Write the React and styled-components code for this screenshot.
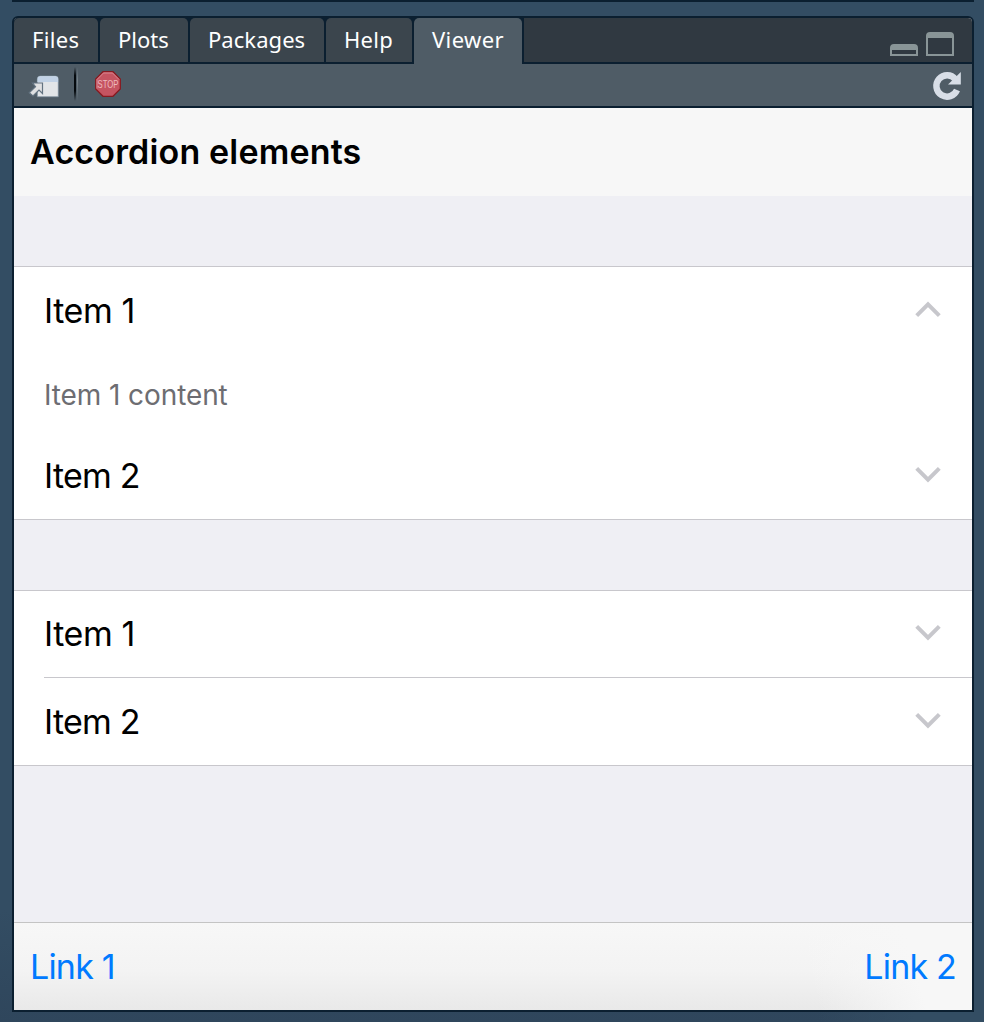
import React from "react";
import styled, { createGlobalStyle, css } from "styled-components";

const edge = "#0b1f30";

const GlobalStyle = createGlobalStyle`
  * { box-sizing: border-box; }
  body { margin: 0; background: #324b61; }
`;

const Desktop = styled.div`
  height: 1022px;
  padding: 0 10px 10px 12px;
  display: flex;
  flex-direction: column;
  overflow: hidden;
  background:
    linear-gradient(90deg, transparent 83%, #334d63 93%),
    linear-gradient(#334d63 0, #334d63 910px, #2f465c 1022px);
`;

const PaneAbove = styled.div`
  height: 2px;
  margin-bottom: 14px;
  background: ${edge};
`;

const Panel = styled.section`
  flex: 1;
  display: flex;
  flex-direction: column;
  border: 2px solid ${edge};
  border-radius: 6px 6px 0 0;
  background: #efeff4;
  overflow: hidden;
`;

const TabStrip = styled.nav`
  height: 46px;
  flex: none;
  display: flex;
  background: linear-gradient(${edge}, ${edge}) bottom / 100% 2px no-repeat #303941;
`;

const TabSlot = styled.div`
  width: ${(p) => p.$width}px;
  height: ${(p) => (p.$active ? 46 : 44)}px;
  padding-right: 2px;
  background: ${edge};
`;

const Tab = styled.div`
  height: 100%;
  padding: 7px 0 0 18px;
  border-radius: 5px 5px 0 0;
  color: #fff;
  background: #3b454d;
  font: 22px/28px "Noto Sans", sans-serif;
  letter-spacing: ${(p) => p.$spacing}px;
  white-space: nowrap;
  ${(p) => p.$active && css`background: #4f5c66;`}
`;

const WindowControls = styled.div`
  display: flex;
  align-items: flex-end;
  gap: 8px;
  height: 38px;
  margin-left: auto;
  margin-right: 18px;
`;

const WindowButton = styled.div`
  width: 28px;
  height: ${(p) => p.$height}px;
  border: 2px solid #899597;
  border-top-width: 6px;
  border-radius: 4px 4px 0 0;
`;

const Toolbar = styled.div`
  height: 44px;
  flex: none;
  display: flex;
  align-items: flex-start;
  padding: 0 8px 0 14px;
  background: #4f5c66;
  border-bottom: 2px solid ${edge};
`;

const ToolIcon = styled.svg`
  display: block;
  flex: none;
  overflow: visible;
  margin: ${(p) => p.$margin};
`;

const Separator = styled.div`
  width: 4px;
  height: 34px;
  margin: 3px 17px 0 14px;
  background:
    linear-gradient(transparent, #050a0e 25%, #050a0e 70%, transparent) left / 2px 100% no-repeat,
    linear-gradient(transparent, #77828a 40%, transparent) right / 1px 100% no-repeat;
`;

const Navbar = styled.header`
  height: 88px;
  flex: none;
  padding: 22px 16px;
  background: #f7f7f7;
  color: #000;
  font: 600 34px/44px Inter, sans-serif;
  letter-spacing: 0.16px;
`;

const List = styled.div`
  flex: none;
  margin-top: 70px;
  border: solid #c8c7cc;
  border-width: 1px 0;
  background: #fff;
`;

const Item = styled.div`
  height: 87px;
  margin-left: 30px;
  padding-right: 30px;
  display: flex;
  align-items: center;
  justify-content: space-between;
  border-bottom: ${(p) => (p.$divided ? "1px solid #c8c7cc" : "none")};
  color: #000;
  font: 34px/44px Inter, sans-serif;
  letter-spacing: ${(p) => p.$spacing ?? -0.75}px;
`;

const ItemContent = styled.div`
  height: 78px;
  padding: 23px 30px 0;
  color: #6d6d72;
  font: 28px/36px Inter, sans-serif;
  letter-spacing: -0.1px;
`;

const Footer = styled.footer`
  height: 88px;
  flex: none;
  margin-top: auto;
  padding: 0 16px;
  display: flex;
  align-items: center;
  justify-content: space-between;
  border-top: 1px solid #c4c4c4;
  background:
    linear-gradient(75deg, transparent 82%, #f7f7f7 93%),
    linear-gradient(#f7f7f7, #f3f3f3 55%, #e9e9e9);
`;

const Link = styled.a`
  color: #007aff;
  font: 34px/44px Inter, sans-serif;
  letter-spacing: -0.8px;
`;

function Chevron({ up }) {
  return (
    <ToolIcon $margin={up ? "-3px 0 0" : "-4px 0 0"} width="28" height="18" viewBox="0 0 28 18" fill="none" stroke="#c7c7cc" strokeWidth="4">
      <path d={up ? "M2.7 15.6 14 4.3 25.3 15.6" : "M2.7 3.4 14 14.7 25.3 3.4"} />
    </ToolIcon>
  );
}

function PopOutIcon() {
  return (
    <ToolIcon $margin="9px 0 0" width="32" height="26" viewBox="0 0 32 26">
      <path d="M9.3 23.8V6a3 3 0 0 1 3-3h15a3 3 0 0 1 3 3v17.8z" fill="#e2e5e8" stroke="#77899a" strokeWidth=".7" />
      <path d="M9.5 9V6a2.8 2.8 0 0 1 2.8-2.8h15A2.8 2.8 0 0 1 30.1 6v3z" fill="#c1d2e6" />
      <path d="M4.5 10h10v10.5L11 17 5 23l-3.8-3.2L7.5 13.7z" fill="#dfe0e2" stroke="#637381" strokeWidth="1.2" />
    </ToolIcon>
  );
}

function StopIcon() {
  return (
    <ToolIcon $margin="7px 0 0" width="26" height="26" viewBox="0 0 26 26">
      <path d="M8 .7h10L25.3 8v10L18 25.3H8L.7 18V8z" fill="#c65461" stroke="#871a20" strokeWidth="1.3" />
      <path d="M2 17.5V8.5L8.5 2h9L24 8.5" fill="none" stroke="#d98891" />
      <text x="13" y="17" textAnchor="middle" textLength="21" lengthAdjust="spacingAndGlyphs" fontFamily="Liberation Sans, sans-serif" fontSize="11" fill="#edb9be">STOP</text>
    </ToolIcon>
  );
}

function RefreshIcon() {
  return (
    <ToolIcon $margin="7px 0 0 auto" width="32" height="30" viewBox="0 0 32 30">
      <path d="M23.4 8.2A10.7 10.7 0 1 0 25 19" fill="none" stroke="#d8dee7" strokeWidth="6.4" />
      <path d="M28.8 1v12.6H16z" fill="#d8dee7" />
    </ToolIcon>
  );
}

const tabs = [
  { name: "Files", width: 86, spacing: 0.35 },
  { name: "Plots", width: 90, spacing: 0 },
  { name: "Packages", width: 136, spacing: 0.05 },
  { name: "Help", width: 88, spacing: 0.25 },
  { name: "Viewer", width: 110, spacing: 0.4, active: true },
];

export default function App() {
  return (
    <>
      <GlobalStyle />
      <Desktop>
        <PaneAbove />
        <Panel>
          <TabStrip>
            {tabs.map((tab) => (
              <TabSlot key={tab.name} $width={tab.width} $active={tab.active}>
                <Tab $active={tab.active} $spacing={tab.spacing}>{tab.name}</Tab>
              </TabSlot>
            ))}
            <WindowControls>
              <WindowButton $height={12} />
              <WindowButton $height={24} />
            </WindowControls>
          </TabStrip>
          <Toolbar>
            <PopOutIcon />
            <Separator />
            <StopIcon />
            <RefreshIcon />
          </Toolbar>
          <Navbar>Accordion elements</Navbar>
          <List>
            <Item $spacing={-0.4}>Item 1<Chevron up /></Item>
            <ItemContent>Item 1 content</ItemContent>
            <Item>Item 2<Chevron /></Item>
          </List>
          <List>
            <Item $spacing={-0.4} $divided>Item 1<Chevron /></Item>
            <Item>Item 2<Chevron /></Item>
          </List>
          <Footer>
            <Link>Link 1</Link>
            <Link>Link 2</Link>
          </Footer>
        </Panel>
      </Desktop>
    </>
  );
}
